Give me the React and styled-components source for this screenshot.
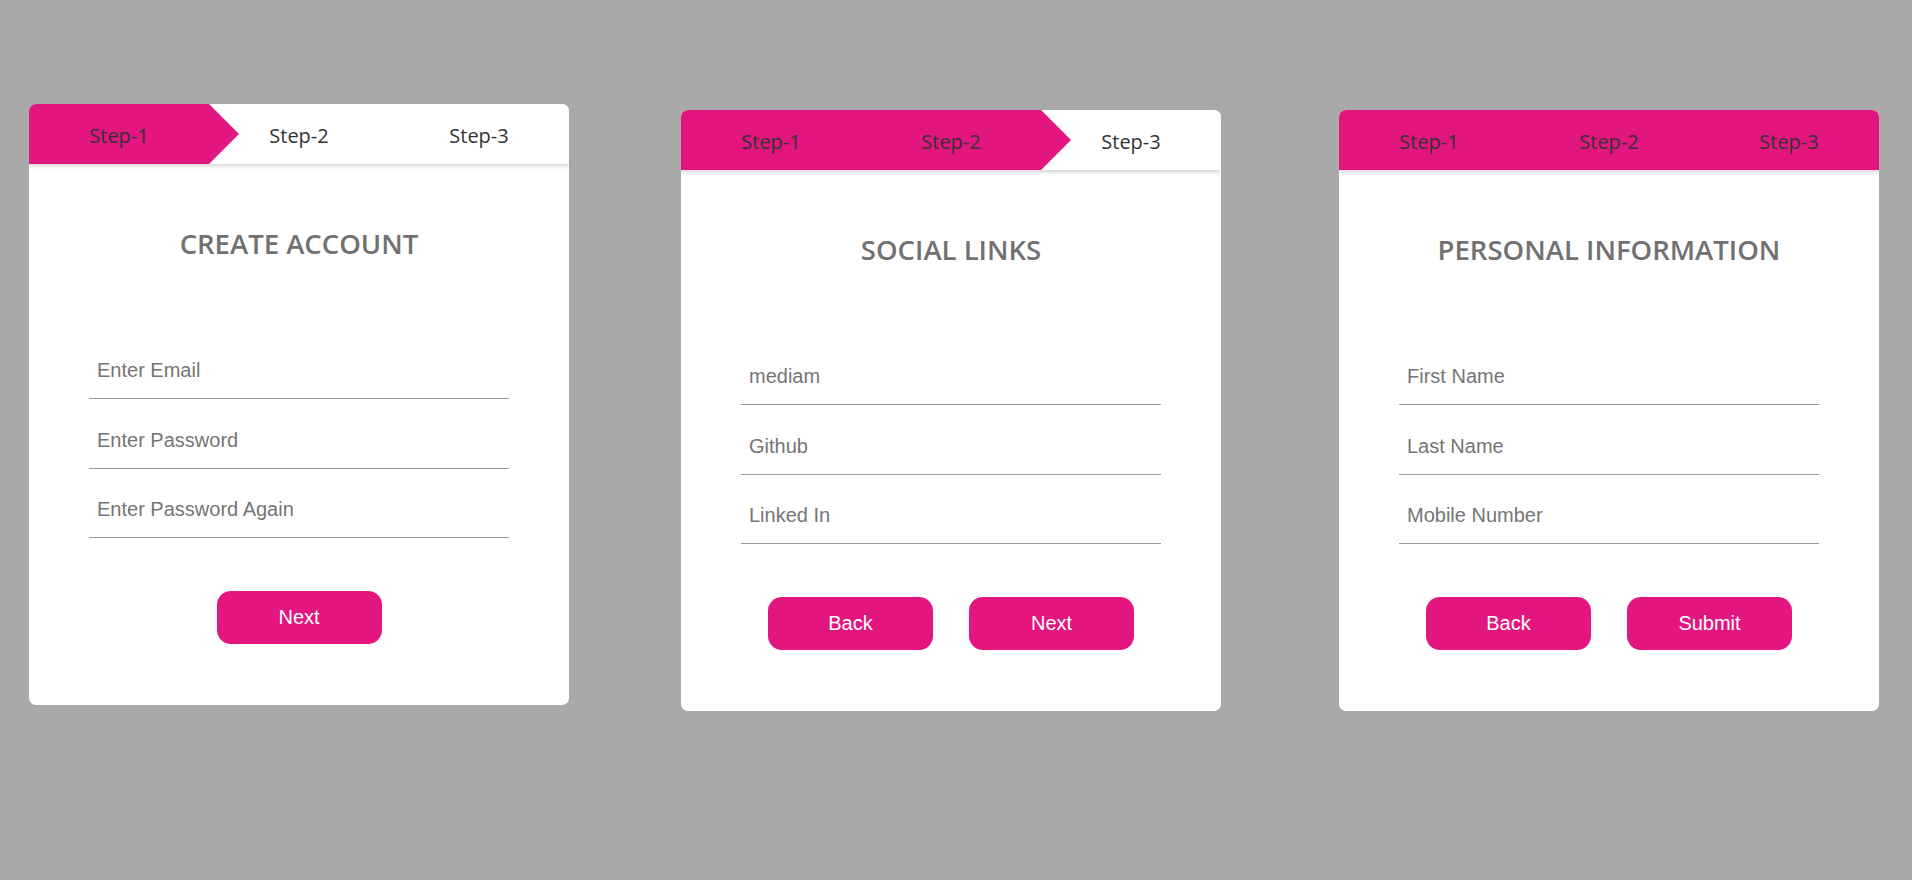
import styled, { createGlobalStyle } from "styled-components";

const PINK = "#e3157f";

const GlobalStyle = createGlobalStyle`
  * {
    box-sizing: border-box;
  }

  body {
    margin: 0;
    background: #a9a9a9;
    font-family: "Liberation Sans", Arial, sans-serif;
  }
`;

const forms = [
  {
    title: "CREATE ACCOUNT",
    done: 1,
    fields: ["Enter Email", "Enter Password", "Enter Password Again"],
    buttons: ["Next"],
    top: 104,
    left: 29,
  },
  {
    title: "SOCIAL LINKS",
    done: 2,
    fields: ["mediam", "Github", "Linked In"],
    buttons: ["Back", "Next"],
    top: 110,
    left: 112,
  },
  {
    title: "PERSONAL INFORMATION",
    done: 3,
    fields: ["First Name", "Last Name", "Mobile Number"],
    buttons: ["Back", "Submit"],
    top: 110,
    left: 118,
  },
];

export default function App() {
  return (
    <>
      <GlobalStyle />
      <Page>
        {forms.map((form) => (
          <Card key={form.title} $top={form.top} $left={form.left}>
            <Steps>
              {[1, 2, 3].map((n) => (
                <Step key={n} $active={n <= form.done} $arrow={n === form.done && n < 3}>
                  Step-{n}
                </Step>
              ))}
            </Steps>
            <Body>
              <Title>{form.title}</Title>
              <Fields>
                {form.fields.map((f) => (
                  <Field key={f} type="text" placeholder={f} />
                ))}
              </Fields>
              <Buttons>
                {form.buttons.map((b) => (
                  <Button key={b}>{b}</Button>
                ))}
              </Buttons>
            </Body>
          </Card>
        ))}
      </Page>
    </>
  );
}

const Page = styled.div`
  display: flex;
  align-items: flex-start;
  min-height: 880px;
`;

const Card = styled.div`
  width: 540px;
  margin-top: ${(p) => p.$top}px;
  margin-left: ${(p) => p.$left}px;
  background: #fff;
  border-radius: 7px;
  overflow: hidden;
  flex-shrink: 0;
`;

const Steps = styled.div`
  display: grid;
  grid-template-columns: repeat(3, 1fr);
  height: 60px;
  box-shadow: 0 2px 4px rgba(0, 0, 0, 0.18);
  position: relative;
  z-index: 1;
`;

const Step = styled.div`
  position: relative;
  display: flex;
  align-items: center;
  justify-content: center;
  padding-top: 2px;
  font-family: "Open Sans", sans-serif;
  font-size: 20px;
  color: #333;
  background: ${(p) => (p.$active ? PINK : "#fff")};

  &::after {
    content: "";
    display: ${(p) => (p.$arrow ? "block" : "none")};
    position: absolute;
    top: 0;
    right: -30px;
    border-left: 30px solid ${PINK};
    border-top: 30px solid transparent;
    border-bottom: 30px solid transparent;
    z-index: 2;
  }
`;

const Body = styled.div`
  padding: 61px 60px 61px;
  display: flex;
  flex-direction: column;
  align-items: center;
`;

const Title = styled.h2`
  margin: 0;
  font-family: "Open Sans", sans-serif;
  font-size: 27.5px;
  font-weight: 600;
  color: #717171;
  line-height: 38px;
`;

const Fields = styled.div`
  width: 420px;
  margin-top: 80px;
  display: flex;
  flex-direction: column;
  gap: 13.5px;
`;

const Field = styled.input`
  height: 56px;
  padding: 0 8px;
  border: none;
  border-bottom: 1px solid #999;
  outline: none;
  font-family: "Liberation Sans", Arial, sans-serif;
  font-size: 20px;
  color: #333;

  &::placeholder {
    color: #757575;
  }
`;

const Buttons = styled.div`
  display: flex;
  gap: 36px;
  margin-top: 53px;
`;

const Button = styled.button`
  width: 165px;
  height: 53px;
  border: none;
  border-radius: 14px;
  background: ${PINK};
  color: #fff;
  font-family: "Liberation Sans", Arial, sans-serif;
  font-size: 20px;
  cursor: pointer;
`;
